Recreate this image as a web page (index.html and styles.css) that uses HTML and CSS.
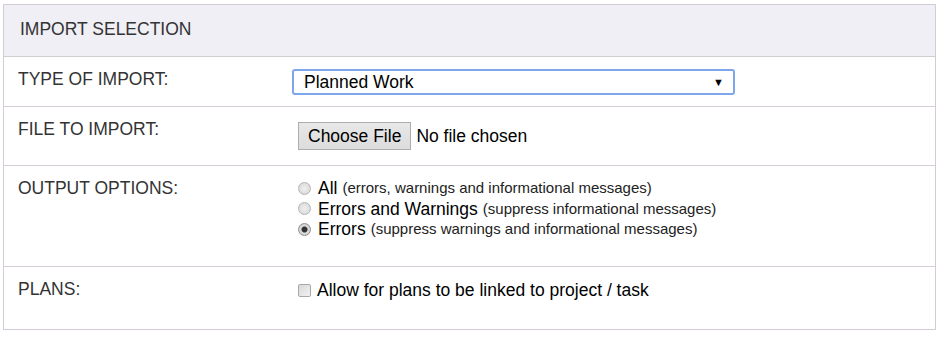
FILE: index.html
```html
<!DOCTYPE html>
<html lang="en">
<head>
  <meta charset="UTF-8">
  <title>Import Selection</title>
  <link rel="stylesheet" href="styles.css">
</head>
<body>
  <div class="panel">
    <div class="panel-header">IMPORT SELECTION</div>

    <div class="row row-type">
      <div class="label">TYPE OF IMPORT:</div>
      <div class="control">
        <div class="select-wrap">
          <select class="select">
            <option>Planned Work</option>
          </select>
        </div>
      </div>
    </div>

    <div class="row row-file">
      <div class="label">FILE TO IMPORT:</div>
      <div class="control file">
        <button class="file-btn" type="button">Choose File</button>
        <span class="file-name">No file chosen</span>
      </div>
    </div>

    <div class="row row-output">
      <div class="label">OUTPUT OPTIONS:</div>
      <div class="control options">
        <label class="option"><input type="radio" name="out"> <span class="main">All</span> <span class="note">(errors, warnings and informational messages)</span></label>
        <label class="option"><input type="radio" name="out"> <span class="main">Errors and Warnings</span> <span class="note">(suppress informational messages)</span></label>
        <label class="option"><input type="radio" name="out" checked> <span class="main">Errors</span> <span class="note">(suppress warnings and informational messages)</span></label>
      </div>
    </div>

    <div class="row row-plans">
      <div class="label">PLANS:</div>
      <div class="control">
        <label class="option"><input type="checkbox"> <span class="main">Allow for plans to be linked to project / task</span></label>
      </div>
    </div>
  </div>
</body>
</html>
```

FILE: styles.css
```css
body {
  margin: 0;
  padding: 0;
  font-family: 'Liberation Sans', Arial, sans-serif;
  background-color: #fff;
  color: #333;
}

.panel {
  margin: 4px 0 0 3px;
  width: 933px;
  box-sizing: border-box;
  border: 1px solid #d3ccd6;
}

.panel-header {
  height: 51px;
  box-sizing: border-box;
  padding: 14px 16px 0;
  font-size: 17.5px;
  line-height: 20px;
  background-color: #efeff5;
}

.row {
  display: flex;
  align-items: flex-start;
  box-sizing: border-box;
  border-top: 1px solid #d6cdd9;
  padding: 12px 14px 0;
  font-size: 17.5px;
  line-height: 20px;
}

.row-type {
  border-top-color: #cfcfcf;
  height: 50px;
}

.row-file {
  height: 59px;
}

.row-output {
  height: 101px;
}

.row-plans {
  height: 63px;
}

.label {
  width: 274px;
  flex-shrink: 0;
}

.control {
  flex: 1;
}

.select-wrap {
  position: relative;
  width: 443px;
}

.select-wrap::after {
  content: "\25BC";
  position: absolute;
  right: 11px;
  top: 7px;
  font-size: 11px;
  line-height: 12px;
  color: #000;
  pointer-events: none;
}

.select {
  appearance: none;
  -webkit-appearance: none;
  width: 443px;
  height: 26px;
  box-sizing: border-box;
  border: 2px solid #7ea6ec;
  border-radius: 3px;
  background: #fff;
  padding: 0 0 0 10px;
  font-family: inherit;
  font-size: 17.5px;
  color: #000;
  outline: none;
}

.file {
  display: flex;
  align-items: center;
  margin: 3px 0 0 6px;
}

.file-btn {
  height: 28px;
  padding: 0 9px;
  font-family: inherit;
  font-size: 17.5px;
  color: #000;
  background: linear-gradient(#e8e8e8, #dcdcdc);
  border: 1px solid #adadad;
  border-radius: 0;
}

.file-name {
  margin-left: 5px;
  color: #000;
}

.options {
  margin-left: 6px;
}

.option {
  display: flex;
  align-items: center;
  height: 20px;
  margin-left: 6px;
  color: #000;
}

.options .option {
  margin-left: 0;
  height: 20.5px;
}

.option .main {
  margin-left: 7px;
}

.option .note {
  font-size: 15px;
  margin-left: 5px;
  color: #222;
}

.row-plans .option {
  margin-top: 1px;
}

.row-plans .option .main {
  margin-left: 6px;
}

input[type="radio"],
input[type="checkbox"] {
  appearance: none;
  -webkit-appearance: none;
  margin: 0;
  width: 13px;
  height: 13px;
  flex-shrink: 0;
  box-sizing: border-box;
  border: 1px solid #b4b4b4;
  background: radial-gradient(circle at 50% 50%, #f0f0f0 0%, #d4d4d4 100%);
}

input[type="radio"] {
  border-radius: 50%;
}

input[type="radio"]:checked {
  border-color: #8f8f8f;
  background: radial-gradient(circle, #333 0, #333 2.5px, #dadada 3.5px, #c8c8c8 100%);
}

input[type="checkbox"] {
  border-radius: 2px;
  border-color: #a8a8a8;
  background: linear-gradient(135deg, #d8d8d8, #f2f2f2);
}
```
